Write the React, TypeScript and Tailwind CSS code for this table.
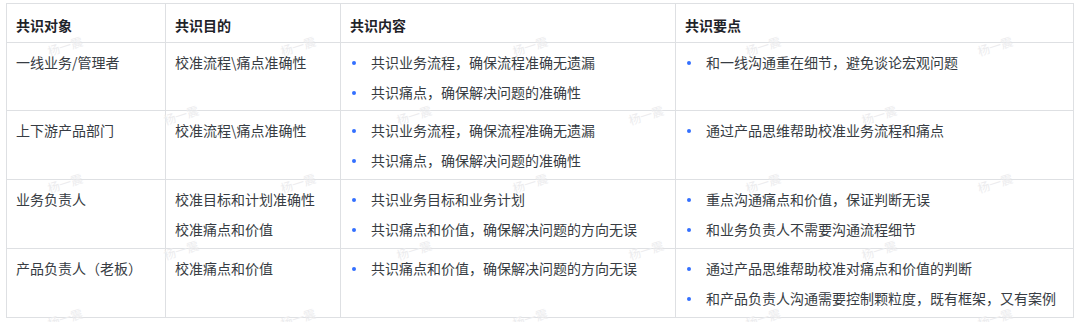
const rows = [
  {
    target: "一线业务/管理者",
    goals: ["校准流程\\痛点准确性"],
    content: ["共识业务流程，确保流程准确无遗漏", "共识痛点，确保解决问题的准确性"],
    points: ["和一线沟通重在细节，避免谈论宏观问题"],
    h: "h-[68px]",
  },
  {
    target: "上下游产品部门",
    goals: ["校准流程\\痛点准确性"],
    content: ["共识业务流程，确保流程准确无遗漏", "共识痛点，确保解决问题的准确性"],
    points: ["通过产品思维帮助校准业务流程和痛点"],
    h: "h-[69px]",
  },
  {
    target: "业务负责人",
    goals: ["校准目标和计划准确性", "校准痛点和价值"],
    content: ["共识业务目标和业务计划", "共识痛点和价值，确保解决问题的方向无误"],
    points: ["重点沟通痛点和价值，保证判断无误", "和业务负责人不需要沟通流程细节"],
    h: "h-[69px]",
  },
  {
    target: "产品负责人（老板）",
    goals: ["校准痛点和价值"],
    content: ["共识痛点和价值，确保解决问题的方向无误"],
    points: ["通过产品思维帮助校准对痛点和价值的判断", "和产品负责人沟通需要控制颗粒度，既有框架，又有案例"],
    h: "h-[69px]",
  },
];

const headers = ["共识对象", "共识目的", "共识内容", "共识要点"];

const Bullets = ({ items }: { items: string[] }) => (
  <ul>
    {items.map((t) => (
      <li key={t} className="flex items-center h-[30px]">
        <span className="ml-[2px] mr-[15px] mt-[2px] w-[4px] h-[4px] rounded-full bg-[#3370ff] shrink-0" />
        <span>{t}</span>
      </li>
    ))}
  </ul>
);

const Lines = ({ items }: { items: string[] }) => (
  <div>
    {items.map((t) => (
      <div key={t} className="h-[30px]">
        {t}
      </div>
    ))}
  </div>
);

// faint "杨一震" watermark repeated over the table
const Watermarks = () => {
  const marks: { x: number; y: number }[] = [];
  const ys = [46, 115, 183, 250, 318];
  ys.forEach((y, i) => {
    const start = i % 2 === 0 ? 65 : 181;
    for (let x = start; x < 1100; x += 232.5) marks.push({ x, y });
  });
  return (
    <div className="absolute inset-0 pointer-events-none overflow-hidden">
      {marks.map((m, i) => (
        <span
          key={i}
          className="absolute text-[12px] leading-none text-[#ececee] -rotate-[18deg] whitespace-nowrap"
          style={{ left: m.x - 18, top: m.y - 6 }}
        >
          杨一震
        </span>
      ))}
    </div>
  );
};

export default function App() {
  return (
    <div
      className="relative w-[1080px] h-[322px] bg-white overflow-hidden text-[14px] leading-[30px] text-[#373c43]"
      style={{ fontFamily: '"Noto Sans CJK SC", "Noto Sans", sans-serif' }}
    >
      <div className="ml-[6px] pt-[3px]">
        <div className="grid grid-cols-[159px_175px_335px_398px] w-fit border-l border-t border-[#dee0e3]">
          {headers.map((h) => (
            <div
              key={h}
              className="h-[39px] pt-[6px] pl-[9px] border-r border-b border-[#dee0e3] font-bold text-[#1f2329]"
            >
              {h}
            </div>
          ))}
          {rows.map((r) => (
            <div key={r.target} className="contents">
              <div className={`${r.h} pt-[4px] pl-[9px] border-r border-b border-[#dee0e3]`}>
                {r.target}
              </div>
              <div className={`${r.h} pt-[4px] pl-[9px] border-r border-b border-[#dee0e3]`}>
                <Lines items={r.goals} />
              </div>
              <div className={`${r.h} pt-[4px] pl-[9px] border-r border-b border-[#dee0e3]`}>
                <Bullets items={r.content} />
              </div>
              <div className={`${r.h} pt-[4px] pl-[9px] border-r border-b border-[#dee0e3]`}>
                <Bullets items={r.points} />
              </div>
            </div>
          ))}
        </div>
      </div>
      <Watermarks />
    </div>
  );
}
